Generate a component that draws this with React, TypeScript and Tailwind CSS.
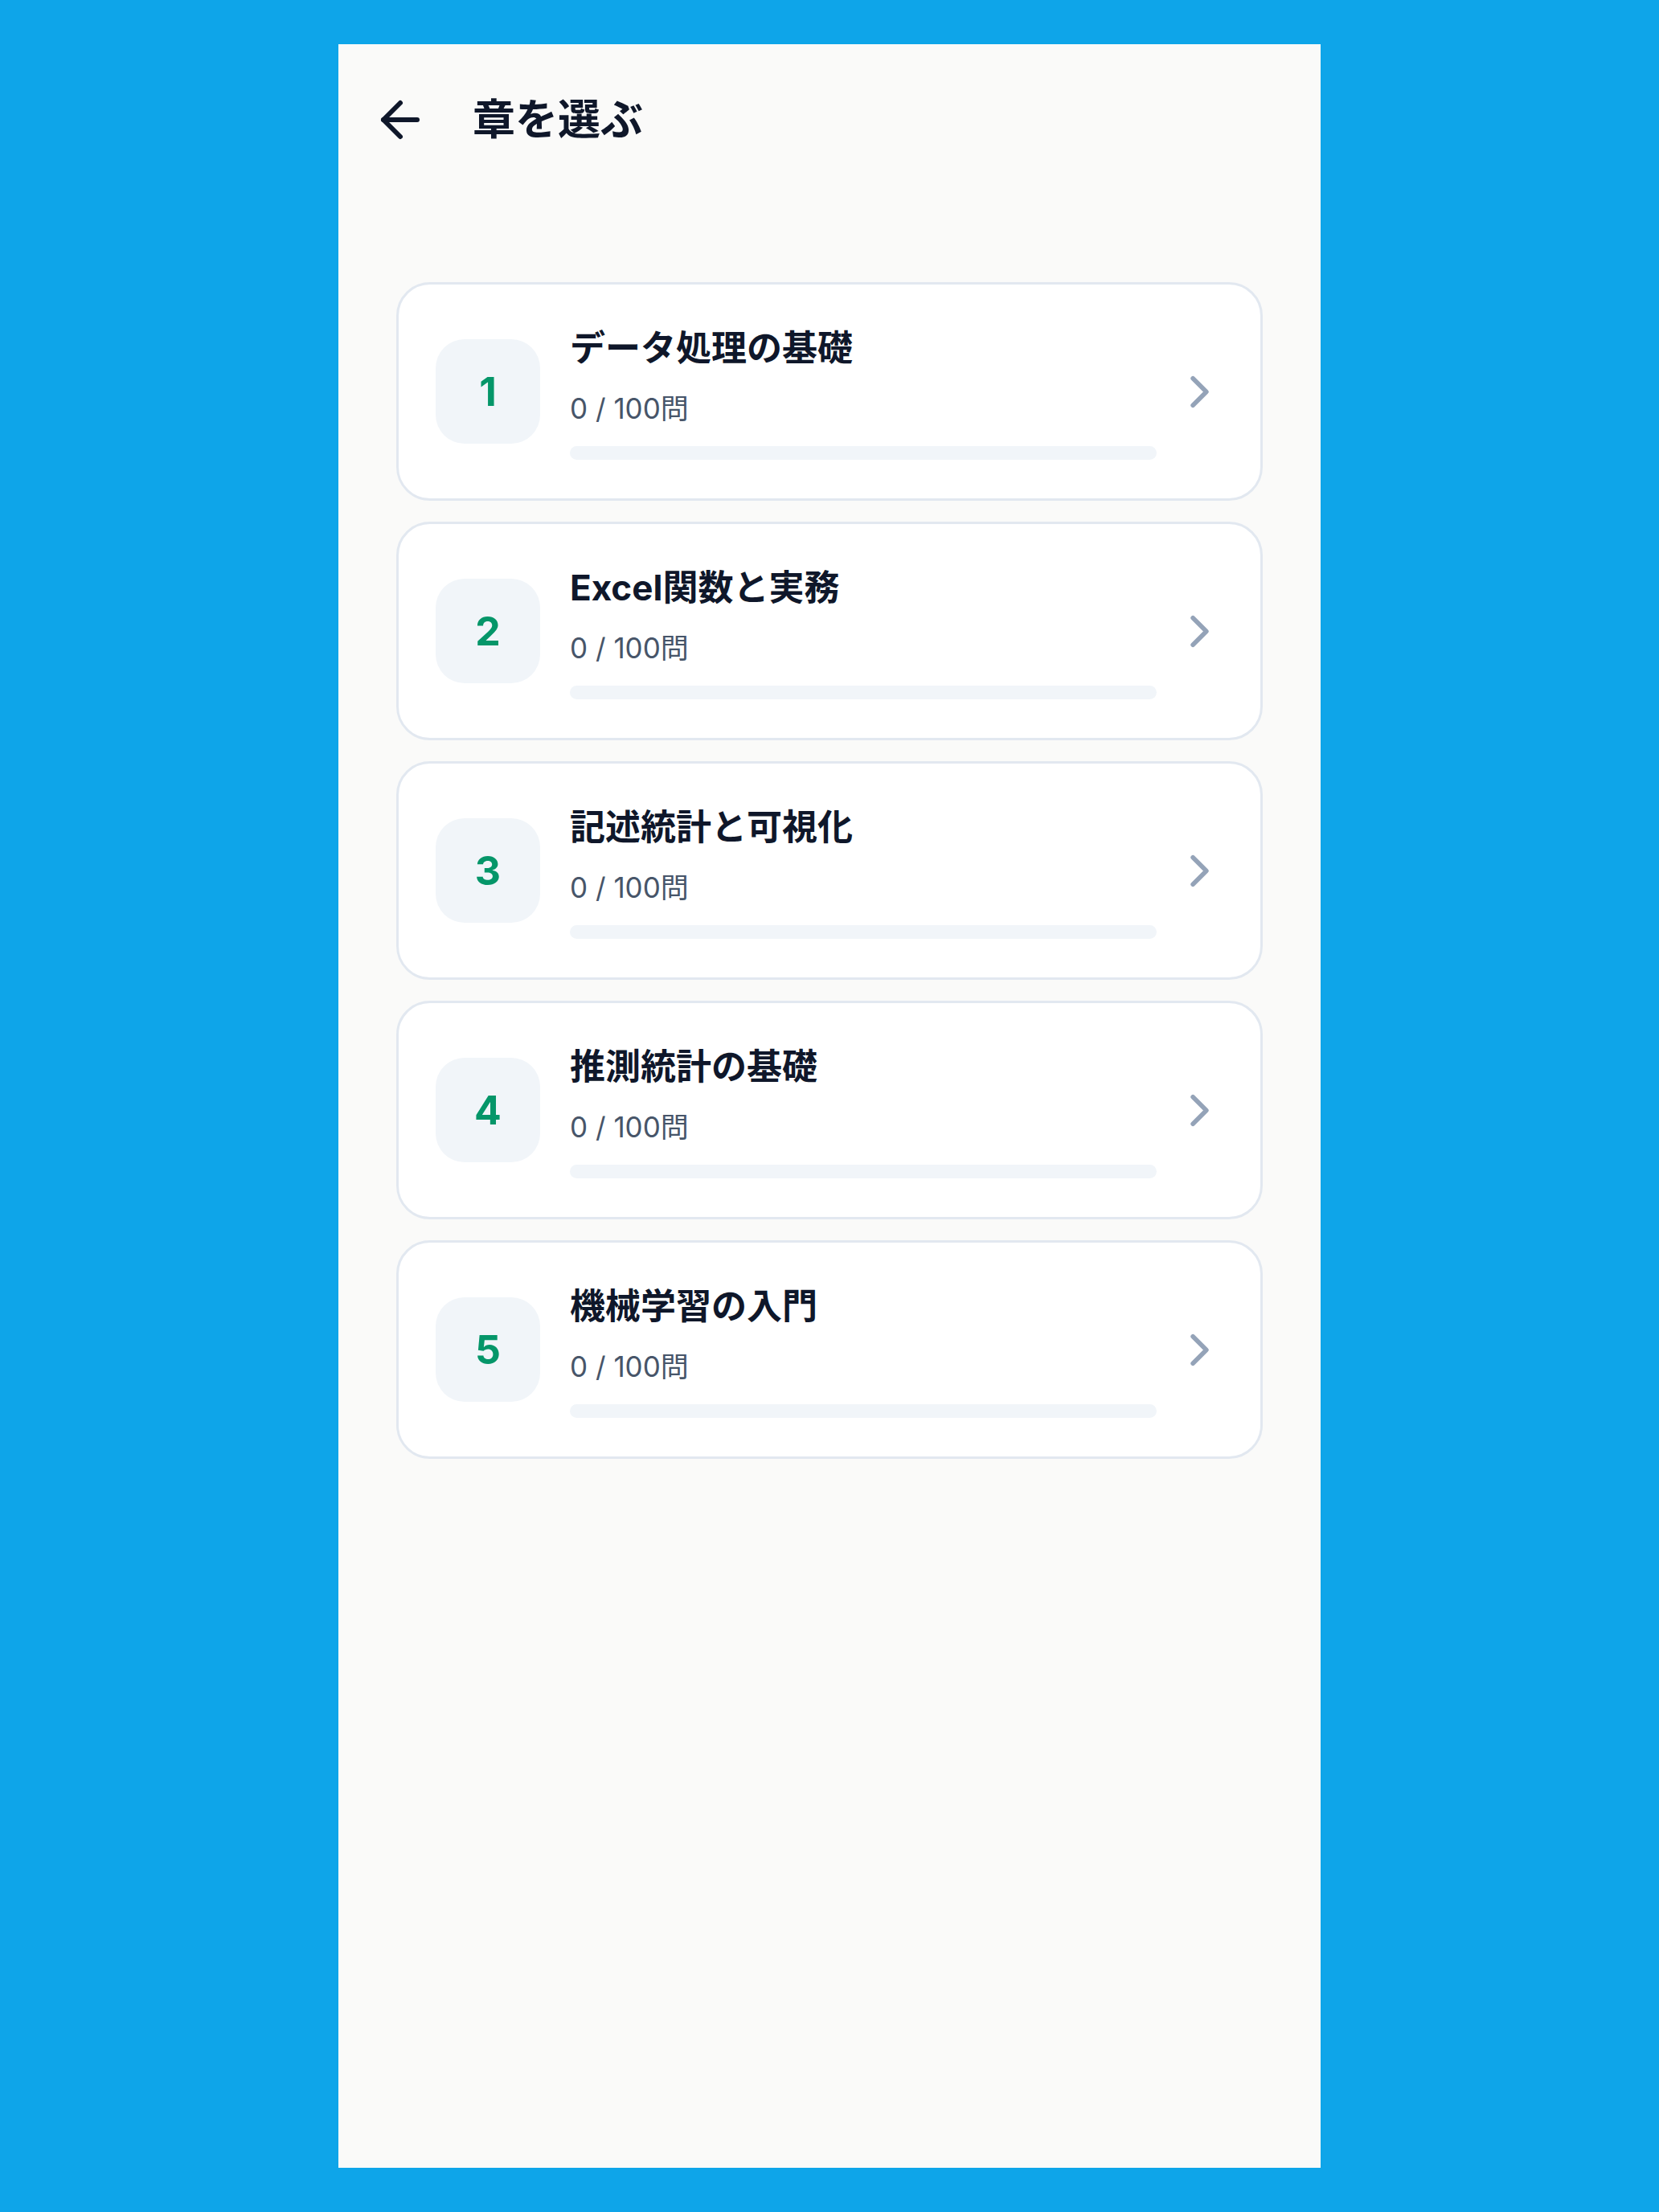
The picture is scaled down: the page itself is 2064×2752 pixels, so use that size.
import React from "react";

const chapters = [
  { n: 1, title: "データ処理の基礎" },
  { n: 2, title: "Excel関数と実務" },
  { n: 3, title: "記述統計と可視化" },
  { n: 4, title: "推測統計の基礎" },
  { n: 5, title: "機械学習の入門" },
];

const font = {
  fontFamily: 'Inter, "Noto Sans CJK JP", "Noto Sans", sans-serif',
};

function ArrowLeft() {
  return (
    <svg width="72" height="72" viewBox="0 0 24 24" fill="none" stroke="#0f172a" strokeWidth="2" strokeLinecap="round" strokeLinejoin="round">
      <path d="m12 19-7-7 7-7" />
      <path d="M19 12H5" />
    </svg>
  );
}

function ChevronRight() {
  return (
    <svg width="67" height="67" viewBox="0 0 24 24" fill="none" stroke="#94a3b8" strokeWidth="2" strokeLinecap="round" strokeLinejoin="round">
      <path d="m9 18 6-6-6-6" />
    </svg>
  );
}

export default function App() {
  return (
    <div className="w-full min-h-[2752px] bg-[#0ea5e9] flex items-center justify-center" style={font}>
      <div className="w-[1222px] h-[2642px] bg-[#fafaf9] flex flex-col">
        <div className="flex items-center pt-[58px] pl-[41px]">
          <div className="w-[72px] h-[72px] flex items-center justify-center">
            <ArrowLeft />
          </div>
          <div className="ml-[54px] text-[53px] leading-[72px] font-bold text-[#0f172a]">章を選ぶ</div>
        </div>
        <div className="mt-[166px] px-[72px] flex flex-col gap-[26px]">
          {chapters.map((c) => (
            <div key={c.n} className="flex items-center bg-white border-[3px] border-[#e2e8f0] rounded-[42px] pl-[46px] pr-[42px] py-[48px]">
              <div className="w-[130px] h-[130px] shrink-0 rounded-[36px] bg-[#f1f5f9] flex items-center justify-center text-[50px] font-bold text-[#059669] leading-none">
                {c.n}
              </div>
              <div className="ml-[37px] flex-1 flex flex-col">
                <div className="text-[44px] leading-[62px] font-bold text-[#0f172a]">{c.title}</div>
                <div className="mt-[21px] text-[35px] leading-[46px] text-[#475569]">0 / 100問</div>
                <div className="mt-[24px] h-[17px] rounded-full bg-[#f1f5f9]" />
              </div>
              <div className="ml-[20px] w-[67px] h-[67px] shrink-0 flex items-center justify-center">
                <ChevronRight />
              </div>
            </div>
          ))}
        </div>
      </div>
    </div>
  );
}
